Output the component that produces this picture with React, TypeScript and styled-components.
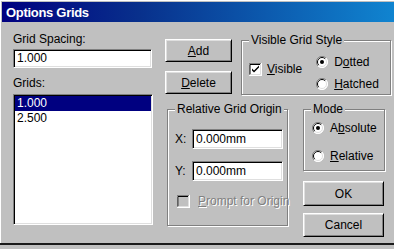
import { createGlobalStyle, styled } from "styled-components";

const GlobalStyle = createGlobalStyle`
  html, body {
    margin: 0;
    padding: 0;
    background: #c0c0c0;
  }
  body {
    font-family: "Liberation Sans", Arial, sans-serif;
    font-size: 12px;
    color: #000;
  }
  u {
    text-decoration-thickness: 1px;
    text-underline-offset: 1px;
  }
`;

const Window = styled.div`
  width: 394px;
  height: 245px;
  box-sizing: border-box;
  padding: 2px 0 0 2px;
  background: #c0c0c0;
  border-bottom: 2px solid #1a1a1a;
  box-shadow: inset 1px 1px 0 #fff;
  overflow: hidden;
`;

const TitleBar = styled.div`
  height: 20px;
  display: flex;
  align-items: center;
  padding-left: 4px;
  background: linear-gradient(90deg, #000080 0%, #08308c 35%, #1084d0 100%);
  color: #fff;
  font-weight: bold;
  font-size: 13px;
  letter-spacing: -0.3px;
`;

const Body = styled.div`
  display: flex;
  gap: 11px;
  padding: 10px 0 0 11px;
`;

const LeftColumn = styled.div`
  width: 140px;
  display: flex;
  flex-direction: column;
`;

const Label = styled.div<{ $top?: number }>`
  height: 14px;
  line-height: 14px;
  margin-top: ${(p) => p.$top ?? 0}px;
  white-space: nowrap;
`;

const sunken = `
  background: #fff;
  border-style: solid;
  border-width: 1px;
  border-color: #808080 #fff #fff #808080;
  box-shadow: inset 1px 1px 0 #000, inset -1px -1px 0 #dfdfdf;
  box-sizing: border-box;
`;

const TextInput = styled.div<{ $width: number; $height: number }>`
  ${sunken}
  width: ${(p) => p.$width}px;
  height: ${(p) => p.$height}px;
  line-height: ${(p) => p.$height - 2}px;
  padding-left: 3px;
  white-space: nowrap;
`;

const ListBox = styled.div`
  ${sunken}
  margin-top: 4px;
  height: 131px;
  padding: 1px 1px 0 1px;
`;

const ListItem = styled.div<{ $selected?: boolean }>`
  height: 15px;
  line-height: 15px;
  padding-left: 2px;
  background: ${(p) => (p.$selected ? "#000080" : "transparent")};
  color: ${(p) => (p.$selected ? "#fff" : "#000")};
`;

const RightPart = styled.div`
  display: flex;
  flex-direction: column;
`;

const TopRow = styled.div`
  display: flex;
  align-items: flex-start;
`;

const ButtonColumn = styled.div`
  display: flex;
  flex-direction: column;
  gap: 9px;
  margin-top: 7px;
  margin-left: 1px;
`;

const Button = styled.div<{ $width: number; $height: number }>`
  width: ${(p) => p.$width}px;
  height: ${(p) => p.$height}px;
  box-sizing: border-box;
  display: flex;
  align-items: center;
  justify-content: center;
  background: #c0c0c0;
  border-style: solid;
  border-width: 1px;
  border-color: #fff #000 #000 #fff;
  box-shadow: inset 1px 1px 0 #dfdfdf, inset -1px -1px 0 #808080;
`;

const Group = styled.fieldset<{ $width: number; $height: number; $left: number; $top?: number }>`
  margin: ${(p) => p.$top ?? 0}px 0 0 ${(p) => p.$left}px;
  width: ${(p) => p.$width}px;
  height: ${(p) => p.$height}px;
  box-sizing: border-box;
  min-width: 0;
  padding: 0 4px 0 7px;
  border: 1px solid #808080;
  box-shadow: inset 1px 1px 0 #fff, 1px 1px 0 #fff;
`;

const Legend = styled.legend`
  padding: 0 2px;
  height: 14px;
  line-height: 14px;
  background: #c0c0c0;
  white-space: nowrap;
`;

const VisibleContent = styled.div`
  display: flex;
  align-items: flex-start;
  padding-top: 8px;
`;

const CheckRow = styled.div<{ $top?: number; $left?: number; $disabled?: boolean }>`
  display: flex;
  align-items: center;
  gap: 5px;
  height: 14px;
  margin-top: ${(p) => p.$top ?? 0}px;
  margin-left: ${(p) => p.$left ?? 0}px;
  white-space: nowrap;
  color: ${(p) => (p.$disabled ? "#808080" : "#000")};
  text-shadow: ${(p) => (p.$disabled ? "1px 1px 0 #fff" : "none")};
`;

const RadioColumn = styled.div<{ $left?: number; $gap: number; $top?: number }>`
  display: flex;
  flex-direction: column;
  gap: ${(p) => p.$gap}px;
  margin-left: ${(p) => p.$left ?? 0}px;
  padding-top: ${(p) => p.$top ?? 0}px;
`;

const RadioRow = styled.div`
  display: flex;
  align-items: center;
  gap: 6px;
  height: 14px;
  white-space: nowrap;
`;

const BottomRow = styled.div`
  display: flex;
  align-items: flex-start;
  margin-top: 7px;
`;

const OriginContent = styled.div`
  display: flex;
  flex-direction: column;
  padding-top: 13px;
`;

const FieldRow = styled.div<{ $top?: number }>`
  display: flex;
  align-items: center;
  margin-top: ${(p) => p.$top ?? 0}px;
`;

const FieldLabel = styled.div`
  width: 17px;
  line-height: 14px;
`;

const ModeColumn = styled.div`
  display: flex;
  flex-direction: column;
  margin-left: 15px;
`;

const DialogButtons = styled.div`
  display: flex;
  flex-direction: column;
  gap: 7px;
  margin-top: 10px;
`;

const CheckBox = ({ checked, disabled }: { checked?: boolean; disabled?: boolean }) => (
  <svg width="13" height="13" viewBox="0 0 13 13" style={{ flex: "none" }}>
    <rect x="0" y="0" width="13" height="13" fill="#fff" />
    <path d="M0 12.5V0.5H12.5" stroke="#808080" fill="none" />
    <path d="M1 11.5V1.5H11.5" stroke="#000" fill="none" />
    <path d="M0.5 13V12.5H13" stroke="#fff" fill="none" />
    <path d="M12.5 0V12.5" stroke="#fff" fill="none" />
    <path d="M1.5 11.5H11.5V1" stroke="#dfdfdf" fill="none" />
    <rect x="2" y="2" width="9" height="9" fill={disabled ? "#c0c0c0" : "#fff"} />
    {checked && <path d="M3 5.5L5 7.5L10 2.5V4.5L5 9.5L3 7.5Z" fill="#000" />}
  </svg>
);

const Radio = ({ checked }: { checked?: boolean }) => (
  <svg width="12" height="12" viewBox="0 0 12 12" style={{ flex: "none" }}>
    <circle cx="6" cy="6" r="5.5" fill="#fff" />
    <path d="M10 2A5.5 5.5 0 0 0 2 10" stroke="#808080" fill="none" />
    <path d="M2 10A5.5 5.5 0 0 0 10 2" stroke="#fff" fill="none" />
    <path d="M9.2 2.8A4.5 4.5 0 0 0 2.8 9.2" stroke="#000" fill="none" />
    <path d="M2.8 9.2A4.5 4.5 0 0 0 9.2 2.8" stroke="#dfdfdf" fill="none" />
    {checked && <circle cx="6" cy="6" r="2" fill="#000" />}
  </svg>
);

export default function App() {
  return (
    <>
      <GlobalStyle />
      <Window>
        <TitleBar>Options Grids</TitleBar>
        <Body>
          <LeftColumn>
            <Label>Grid Spacing:</Label>
            <TextInput $width={139} $height={19} style={{ marginTop: 3 }}>
              1.000
            </TextInput>
            <Label $top={8}>Grids:</Label>
            <ListBox>
              <ListItem $selected>1.000</ListItem>
              <ListItem>2.500</ListItem>
            </ListBox>
          </LeftColumn>

          <RightPart>
            <TopRow>
              <ButtonColumn>
                <Button $width={67} $height={23}>
                  <span>
                    <u>A</u>dd
                  </span>
                </Button>
                <Button $width={67} $height={23}>
                  <span>
                    <u>D</u>elete
                  </span>
                </Button>
              </ButtonColumn>
              <Group $width={150} $height={62} $left={9} $top={1}>
                <Legend>Visible Grid Style</Legend>
                <VisibleContent>
                  <CheckRow $top={7}>
                    <CheckBox checked />
                    <span>
                      <u>V</u>isible
                    </span>
                  </CheckRow>
                  <RadioColumn $left={14} $gap={8}>
                    <RadioRow>
                      <Radio checked />
                      <span>
                        D<u>o</u>tted
                      </span>
                    </RadioRow>
                    <RadioRow>
                      <Radio />
                      <span>
                        <u>H</u>atched
                      </span>
                    </RadioRow>
                  </RadioColumn>
                </VisibleContent>
              </Group>
            </TopRow>

            <BottomRow>
              <Group $width={121} $height={124} $left={3}>
                <Legend>Relative Grid Origin</Legend>
                <OriginContent>
                  <FieldRow>
                    <FieldLabel>X:</FieldLabel>
                    <TextInput $width={91} $height={20}>
                      0.000mm
                    </TextInput>
                  </FieldRow>
                  <FieldRow $top={12}>
                    <FieldLabel>Y:</FieldLabel>
                    <TextInput $width={91} $height={20}>
                      0.000mm
                    </TextInput>
                  </FieldRow>
                  <CheckRow $top={13} $left={2} $disabled>
                    <CheckBox disabled />
                    <span style={{ marginLeft: 3 }}>
                      <u>P</u>rompt for Origin
                    </span>
                  </CheckRow>
                </OriginContent>
              </Group>

              <ModeColumn>
                <Group $width={82} $height={69} $left={0}>
                  <Legend>Mode</Legend>
                  <RadioColumn $gap={14} $top={5} $left={1}>
                    <RadioRow>
                      <Radio checked />
                      <span>
                        A<u>b</u>solute
                      </span>
                    </RadioRow>
                    <RadioRow>
                      <Radio />
                      <span>
                        <u>R</u>elative
                      </span>
                    </RadioRow>
                  </RadioColumn>
                </Group>
                <DialogButtons>
                  <Button $width={81} $height={25}>
                    OK
                  </Button>
                  <Button $width={81} $height={24}>
                    Cancel
                  </Button>
                </DialogButtons>
              </ModeColumn>
            </BottomRow>
          </RightPart>
        </Body>
      </Window>
    </>
  );
}
